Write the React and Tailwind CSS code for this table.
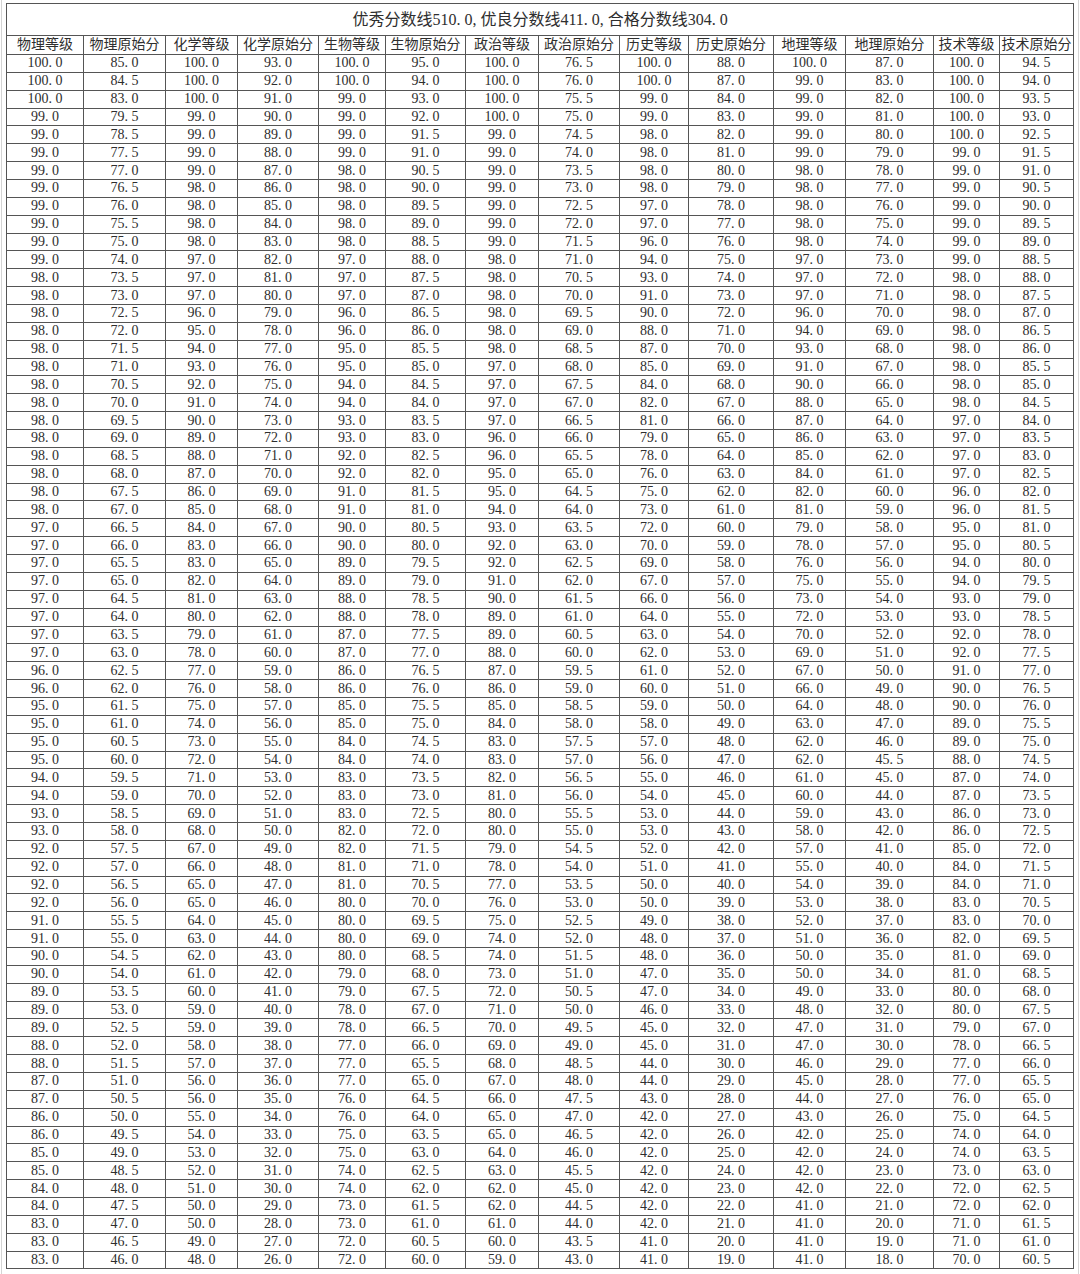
const headers = ["物理等级", "物理原始分", "化学等级", "化学原始分", "生物等级", "生物原始分", "政治等级", "政治原始分", "历史等级", "历史原始分", "地理等级", "地理原始分", "技术等级", "技术原始分"];
const widths = [77, 82, 72, 81, 67, 80, 73, 81, 69, 85, 72, 88, 66, 74];

const raw = `100 85 100 93 100 95 100 76.5 100 88 100 87 100 94.5
100 84.5 100 92 100 94 100 76 100 87 99 83 100 94
100 83 100 91 99 93 100 75.5 99 84 99 82 100 93.5
99 79.5 99 90 99 92 100 75 99 83 99 81 100 93
99 78.5 99 89 99 91.5 99 74.5 98 82 99 80 100 92.5
99 77.5 99 88 99 91 99 74 98 81 99 79 99 91.5
99 77 99 87 98 90.5 99 73.5 98 80 98 78 99 91
99 76.5 98 86 98 90 99 73 98 79 98 77 99 90.5
99 76 98 85 98 89.5 99 72.5 97 78 98 76 99 90
99 75.5 98 84 98 89 99 72 97 77 98 75 99 89.5
99 75 98 83 98 88.5 99 71.5 96 76 98 74 99 89
99 74 97 82 97 88 98 71 94 75 97 73 99 88.5
98 73.5 97 81 97 87.5 98 70.5 93 74 97 72 98 88
98 73 97 80 97 87 98 70 91 73 97 71 98 87.5
98 72.5 96 79 96 86.5 98 69.5 90 72 96 70 98 87
98 72 95 78 96 86 98 69 88 71 94 69 98 86.5
98 71.5 94 77 95 85.5 98 68.5 87 70 93 68 98 86
98 71 93 76 95 85 97 68 85 69 91 67 98 85.5
98 70.5 92 75 94 84.5 97 67.5 84 68 90 66 98 85
98 70 91 74 94 84 97 67 82 67 88 65 98 84.5
98 69.5 90 73 93 83.5 97 66.5 81 66 87 64 97 84
98 69 89 72 93 83 96 66 79 65 86 63 97 83.5
98 68.5 88 71 92 82.5 96 65.5 78 64 85 62 97 83
98 68 87 70 92 82 95 65 76 63 84 61 97 82.5
98 67.5 86 69 91 81.5 95 64.5 75 62 82 60 96 82
98 67 85 68 91 81 94 64 73 61 81 59 96 81.5
97 66.5 84 67 90 80.5 93 63.5 72 60 79 58 95 81
97 66 83 66 90 80 92 63 70 59 78 57 95 80.5
97 65.5 83 65 89 79.5 92 62.5 69 58 76 56 94 80
97 65 82 64 89 79 91 62 67 57 75 55 94 79.5
97 64.5 81 63 88 78.5 90 61.5 66 56 73 54 93 79
97 64 80 62 88 78 89 61 64 55 72 53 93 78.5
97 63.5 79 61 87 77.5 89 60.5 63 54 70 52 92 78
97 63 78 60 87 77 88 60 62 53 69 51 92 77.5
96 62.5 77 59 86 76.5 87 59.5 61 52 67 50 91 77
96 62 76 58 86 76 86 59 60 51 66 49 90 76.5
95 61.5 75 57 85 75.5 85 58.5 59 50 64 48 90 76
95 61 74 56 85 75 84 58 58 49 63 47 89 75.5
95 60.5 73 55 84 74.5 83 57.5 57 48 62 46 89 75
95 60 72 54 84 74 83 57 56 47 62 45.5 88 74.5
94 59.5 71 53 83 73.5 82 56.5 55 46 61 45 87 74
94 59 70 52 83 73 81 56 54 45 60 44 87 73.5
93 58.5 69 51 83 72.5 80 55.5 53 44 59 43 86 73
93 58 68 50 82 72 80 55 53 43 58 42 86 72.5
92 57.5 67 49 82 71.5 79 54.5 52 42 57 41 85 72
92 57 66 48 81 71 78 54 51 41 55 40 84 71.5
92 56.5 65 47 81 70.5 77 53.5 50 40 54 39 84 71
92 56 65 46 80 70 76 53 50 39 53 38 83 70.5
91 55.5 64 45 80 69.5 75 52.5 49 38 52 37 83 70
91 55 63 44 80 69 74 52 48 37 51 36 82 69.5
90 54.5 62 43 80 68.5 74 51.5 48 36 50 35 81 69
90 54 61 42 79 68 73 51 47 35 50 34 81 68.5
89 53.5 60 41 79 67.5 72 50.5 47 34 49 33 80 68
89 53 59 40 78 67 71 50 46 33 48 32 80 67.5
89 52.5 59 39 78 66.5 70 49.5 45 32 47 31 79 67
88 52 58 38 77 66 69 49 45 31 47 30 78 66.5
88 51.5 57 37 77 65.5 68 48.5 44 30 46 29 77 66
87 51 56 36 77 65 67 48 44 29 45 28 77 65.5
87 50.5 56 35 76 64.5 66 47.5 43 28 44 27 76 65
86 50 55 34 76 64 65 47 42 27 43 26 75 64.5
86 49.5 54 33 75 63.5 65 46.5 42 26 42 25 74 64
85 49 53 32 75 63 64 46 42 25 42 24 74 63.5
85 48.5 52 31 74 62.5 63 45.5 42 24 42 23 73 63
84 48 51 30 74 62 62 45 42 23 42 22 72 62.5
84 47.5 50 29 73 61.5 62 44.5 42 22 41 21 72 62
83 47 50 28 73 61 61 44 42 21 41 20 71 61.5
83 46.5 49 27 72 60.5 60 43.5 41 20 41 19 71 61
83 46 48 26 72 60 59 43 41 19 41 18 70 60.5`;

const rows = raw.split("\n").map((line) => line.trim().split(/\s+/).map((v) => Number(v).toFixed(1)));

const font = { fontFamily: '"Liberation Serif", "Noto Sans CJK SC", serif' };

// half-width punctuation, like SimSun: the dot and comma take a full digit cell
function Num({ value, cell = "w-[7px]" }) {
  const [a, b] = value.split(".");
  return (
    <>
      {a}
      <span className={`inline-block text-left ${cell}`}>.</span>
      {b}
    </>
  );
}

function Title() {
  const parts = [
    ["优秀分数线", "510.0"],
    ["优良分数线", "411.0"],
    ["合格分数线", "304.0"],
  ];
  return parts.map(([label, v], i) => (
    <span key={label}>
      {label}
      <Num value={v} cell="w-[8px]" />
      {i < parts.length - 1 && <span className="inline-block w-[8px] text-left">,</span>}
    </span>
  ));
}

export default function App() {
  return (
    <div className="w-[1080px] h-[1274px] bg-white overflow-hidden px-[1px]" style={font}>
      <div className="h-full border-x border-[#d4d4d4] pl-[4px] pr-[2px] pt-[3px]">
        <table className="table-fixed border-collapse text-[#2e2e2e] w-[1068px]">
          <colgroup>
            {widths.map((w, i) => <col key={i} style={{ width: w }} />)}
          </colgroup>
          <tbody>
            <tr className="h-[32px]">
              <td colSpan={14} className="border border-[#555] text-center text-[16px] leading-none p-0 pt-[1px] whitespace-nowrap">
                <Title />
              </td>
            </tr>
            <tr className="h-[19px]">
              {headers.map((h) => (
                <td key={h} className="border border-[#555] text-center text-[14px] leading-none p-0 whitespace-nowrap">{h}</td>
              ))}
            </tr>
            {rows.map((r, i) => (
              <tr key={i} className="h-[17.87px]">
                {r.map((v, j) => (
                  <td key={j} className="border border-[#555] text-center text-[14px] leading-none p-0 whitespace-nowrap">
                    <Num value={v} />
                  </td>
                ))}
              </tr>
            ))}
          </tbody>
        </table>
      </div>
    </div>
  );
}
